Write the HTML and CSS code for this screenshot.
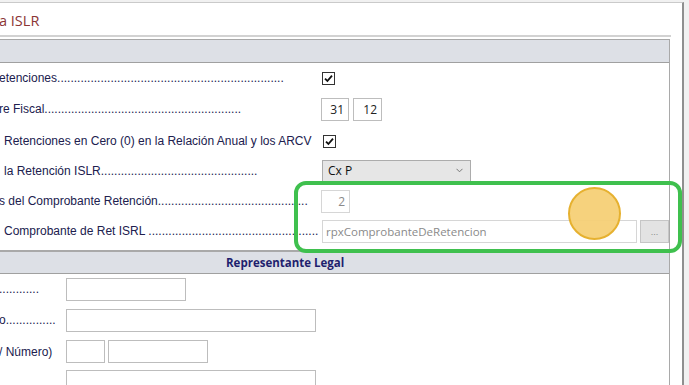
FILE: index.html
```html
<!DOCTYPE html>
<html lang="es">
<head>
  <meta charset="UTF-8">
  <title>Retenciones ISLR</title>
  <link rel="stylesheet" href="styles.css">
</head>
<body>
  <div class="window">
    <div class="titlebar">
      <h1 class="title">a ISLR</h1>
    </div>

    <div class="panel">
      <div class="band"></div>

      <div class="rows">
        <div class="row r1">
          <span class="label">etenciones....................................................................</span>
          <span class="ctl">
            <svg class="check" width="13" height="13" viewBox="0 0 13 13"><rect x="0.5" y="0.5" width="12" height="12" fill="#fff" stroke="#333"/><path d="M3 6.6 L5.4 9 L10 3.6" fill="none" stroke="#111" stroke-width="1.8"/></svg>
          </span>
        </div>
        <div class="row r2">
          <span class="label">re Fiscal...........................................................</span>
          <span class="ctl">
            <span class="box num w28">31</span>
            <span class="box num w29">12</span>
          </span>
        </div>
        <div class="row r3">
          <span class="label lead">Retenciones en Cero (0) en la Relación Anual y los ARCV</span>
          <span class="ctl">
            <svg class="check" width="13" height="13" viewBox="0 0 13 13"><rect x="0.5" y="0.5" width="12" height="12" fill="#fff" stroke="#333"/><path d="M3 6.6 L5.4 9 L10 3.6" fill="none" stroke="#111" stroke-width="1.8"/></svg>
          </span>
        </div>
        <div class="row r4">
          <span class="label lead">la Retención ISLR...............................................</span>
          <span class="ctl">
            <span class="select">Cx P
              <svg class="chev" width="7" height="5" viewBox="0 0 7 5"><path d="M0.5 0.8 L3.5 3.8 L6.5 0.8" fill="none" stroke="#777" stroke-width="1"/></svg>
            </span>
          </span>
        </div>
        <div class="row r5">
          <span class="label">s del Comprobante Retención.............................................</span>
          <span class="ctl">
            <span class="box num w29 off">2</span>
          </span>
        </div>
        <div class="row r6">
          <span class="label lead">Comprobante de Ret ISRL ...................................................</span>
          <span class="ctl">
            <span class="box path off">rpxComprobanteDeRetencion</span>
            <span class="dots-btn">...</span>
          </span>
        </div>
      </div>

      <div class="band band-title">Representante Legal</div>

      <div class="rows lower">
        <div class="row ra">
          <span class="label">............</span>
          <span class="ctl"><span class="box w120"></span></span>
        </div>
        <div class="row rb">
          <span class="label">o...............</span>
          <span class="ctl"><span class="box w250"></span></span>
        </div>
        <div class="row rc">
          <span class="label">/ Número)</span>
          <span class="ctl">
            <span class="box w39"></span>
            <span class="box w100"></span>
          </span>
        </div>
        <div class="row rd">
          <span class="label">...........</span>
          <span class="ctl"><span class="box w250"></span></span>
        </div>
      </div>
    </div>

    <div class="highlight"></div>
    <div class="pointer"></div>
  </div>
</body>
</html>
```

FILE: styles.css
```css
:root {
  --label-color: #20204e;
  --box-border: #bdbdbd;
  --band-color: #dde0e6;
}
body {
  margin: 0;
  width: 689px;
  height: 385px;
  overflow: hidden;
  background: #f1f1f1;
  font-family: "Liberation Sans", Arial, sans-serif;
  font-size: 12px;
  color: var(--label-color);
}
.window {
  width: 682px;
  height: 383px;
  margin-top: 2px;
  background: #fff;
  border-top: 1px solid #cacaca;
  border-right: 2px solid #8f8f8f;
  overflow: hidden;
}
.titlebar {
  width: 671px;
  height: 32px;
  border-bottom: 2px solid #d2d2d2;
}
.title {
  margin: 0 0 0 -1px;
  padding-top: 9px;
  font-family: "Open Sans", sans-serif;
  font-weight: 400;
  font-size: 14.5px;
  line-height: 18px;
  color: #8b3535;
}
.panel {
  width: 669px;
  margin-top: 2px;
  border-right: 1px solid #a9a9a9;
  height: 400px;
}
.band {
  height: 22px;
  background: var(--band-color);
  border-top: 1px solid #a8a8a8;
  border-bottom: 1px solid #a0a0a0;
}
.band-title {
  height: 21px;
  border-top: 2px solid #a9a9a9;
  padding-left: 226px;
  font-family: "Open Sans", sans-serif;
  font-weight: 700;
  font-size: 11.5px;
  line-height: 21px;
  color: #1f1f6e;
}
.rows {
  display: flex;
  flex-direction: column;
  margin-bottom: 6px;
}
.row {
  display: flex;
  align-items: center;
}
.r1 { height: 30px; }
.r2 { height: 32px; }
.r3 { height: 32px; }
.r4 { height: 27px; }
.r5 { height: 34px; }
.r6 { height: 26px; }
.ra { height: 30px; }
.rb { height: 32px; }
.rc { height: 31px; }
.rd { height: 32px; align-items: flex-start; padding-top: 3px; }
.rd .label { padding-top: 9px; }

.label {
  width: 322px;
  flex: none;
  white-space: nowrap;
  overflow: hidden;
  margin-left: -1px;
}
.label.lead {
  padding-left: 5px;
  width: 318px;
}
.lower .label {
  width: 67px;
}
.ctl {
  display: flex;
  align-items: center;
  gap: 4px;
}
.check {
  display: block;
  margin-left: 1px;
}
.box {
  display: block;
  box-sizing: border-box;
  height: 23px;
  border: 1px solid var(--box-border);
  background: #fff;
  font-family: "Open Sans", sans-serif;
  font-size: 12px;
  line-height: 21px;
  color: #222;
}
.num {
  text-align: right;
  padding-right: 4px;
}
.w28 { width: 28px; }
.w29 { width: 29px; }
.w39 { width: 39px; }
.w100 { width: 100px; }
.w120 { width: 120px; }
.w250 { width: 250px; }
.rc .ctl { gap: 3px; }
.off {
  border-color: #d6d6d6;
  color: #8a8a8a;
}
.path {
  width: 315px;
  padding-left: 3px;
  font-size: 11.5px;
}
.r6 .ctl { gap: 3px; }
.select {
  display: flex;
  align-items: center;
  justify-content: space-between;
  box-sizing: border-box;
  width: 149px;
  height: 22px;
  padding: 0 7px 0 5px;
  background: #e6e6e6;
  border: 1px solid #acacac;
  font-family: "Open Sans", sans-serif;
  font-size: 12px;
  color: #111;
}
.dots-btn {
  display: block;
  box-sizing: border-box;
  width: 29px;
  height: 23px;
  background: #e3e3e3;
  border: 1px solid #c6c6c6;
  text-align: center;
  font-size: 9px;
  line-height: 22px;
  color: #8a8a8a;
}

/* overlays from the screen recording */
.highlight {
  position: absolute;
  left: 294px;
  top: 181px;
  width: 388px;
  height: 72px;
  box-sizing: border-box;
  border: 4px solid #3fc04e;
  border-radius: 12px;
}
.pointer {
  position: absolute;
  left: 568px;
  top: 187px;
  width: 53px;
  height: 53px;
  box-sizing: border-box;
  border: 2px solid #e6b130;
  border-radius: 50%;
  background: rgba(245, 208, 118, 0.95);
}
```
